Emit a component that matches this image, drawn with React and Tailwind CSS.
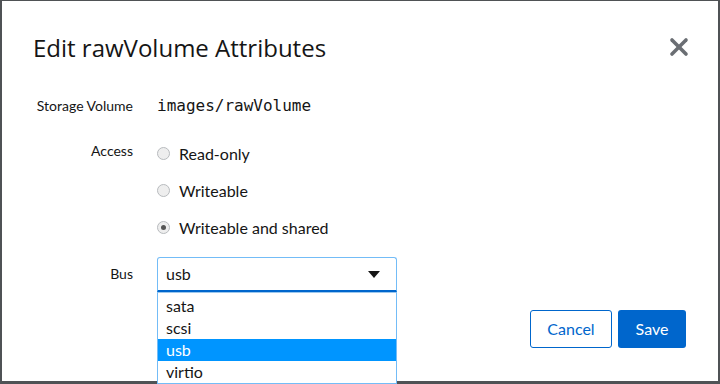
import { X } from "lucide-react";

const accessOptions = [
  { id: "ro", label: "Read-only" },
  { id: "rw", label: "Writeable" },
  { id: "shared", label: "Writeable and shared" },
];

const busOptions = ["sata", "scsi", "usb", "virtio"];

function Radio({ label, checked }) {
  return (
    <label className="flex items-center h-[37px] gap-[9px] text-[16px] text-[#151515]">
      <span className="w-[13px] h-[13px] rounded-full border border-[#b8bbbe] bg-[#eeeeee] flex items-center justify-center">
        {checked && <span className="w-[5px] h-[5px] rounded-full bg-[#555555]" />}
      </span>
      {label}
    </label>
  );
}

export default function App() {
  return (
    <div className="h-[384px] w-[720px] bg-[#4f5255] overflow-hidden" style={{ fontFamily: "Lato, sans-serif" }}>
      <div className="relative ml-[2px] mt-[1px] w-[716px] h-[380px] bg-white">
        <div className="flex items-start justify-between pl-[31px] pr-[25px] pt-[32px]">
          <h1 className="text-[24px] leading-[30px] text-[#151515]" style={{ fontFamily: '"Open Sans", sans-serif' }}>
            Edit rawVolume Attributes
          </h1>
          <button className="text-[#6a6e73]">
            <X size={28} strokeWidth={3.1} />
          </button>
        </div>

        <div className="mt-[31px] pl-[31px] grid grid-cols-[100px_240px] gap-x-[24px] text-[#151515]">
          <div className="text-[14px] leading-[24px] text-right whitespace-nowrap">Storage Volume</div>
          <div className="text-[16px] leading-[24px]" style={{ fontFamily: '"DejaVu Sans Mono", monospace' }}>
            images/rawVolume
          </div>

          <div className="mt-[23px] text-[14px] leading-[20px] text-right self-start">Access</div>
          <div className="mt-[17px] flex flex-col">
            {accessOptions.map((o) => (
              <Radio key={o.id} label={o.label} checked={o.id === "shared"} />
            ))}
          </div>

          <div className="mt-[18px] text-[14px] leading-[20px] text-right self-start">Bus</div>
          <div className="mt-[11px] w-[240px] relative">
            <div className="h-[35px] flex items-center justify-between pl-[8px] pr-[16px] border border-[#73bcf7] border-b-2 border-b-[#0066cc] rounded-t-[3px] text-[16px]">
              <span>usb</span>
              <svg width="12" height="7" viewBox="0 0 12 7">
                <path d="M0 0h12L6 7z" fill="#151515" />
              </svg>
            </div>
            <ul className="absolute left-0 top-[35px] w-[240px] pt-[2px] bg-white border border-[#73bcf7] border-t-[#9cc8ee] z-10 text-[16px]">
              {busOptions.map((b) => (
                <li
                  key={b}
                  className={
                    b === "usb"
                      ? "h-[22px] leading-[22px] pl-[8px] bg-[#0095ff] text-white"
                      : "h-[22px] leading-[22px] pl-[8px] text-[#151515]"
                  }
                >
                  {b}
                </li>
              ))}
            </ul>
          </div>
        </div>

        <div className="absolute right-[32px] bottom-[33px] flex gap-[6px] text-[16px]">
          <button className="h-[38px] w-[82px] rounded-[3px] border border-[#0066cc] text-[#0066cc]">Cancel</button>
          <button className="h-[38px] w-[68px] rounded-[3px] bg-[#0066cc] text-white">Save</button>
        </div>
      </div>
    </div>
  );
}
